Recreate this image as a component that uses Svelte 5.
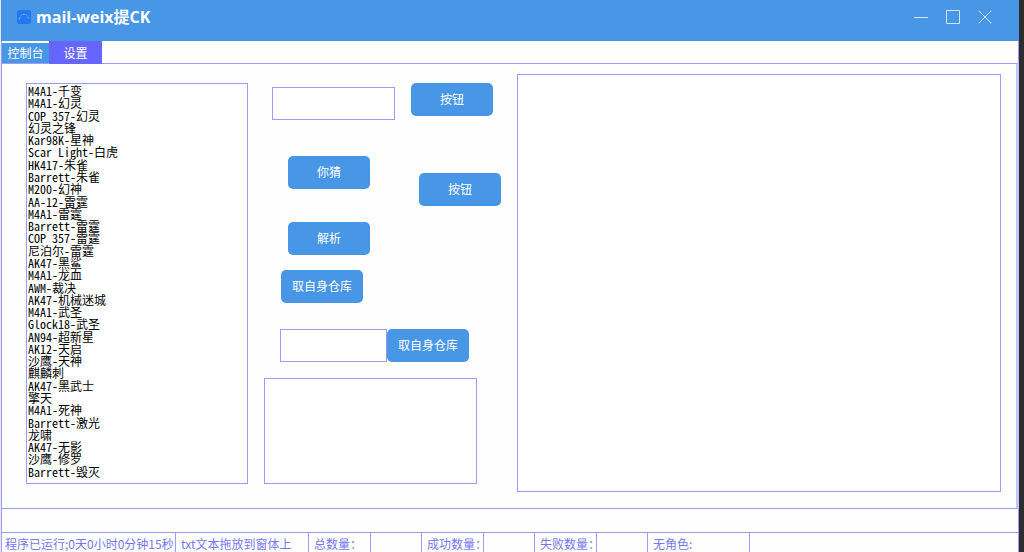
<script lang="ts">
	const weapons = [
		"M4A1-千变",
		"M4A1-幻灵",
		"COP 357-幻灵",
		"幻灵之锋",
		"Kar98K-星神",
		"Scar Light-白虎",
		"HK417-朱雀",
		"Barrett-朱雀",
		"M200-幻神",
		"AA-12-雷霆",
		"M4A1-雷霆",
		"Barrett-雷霆",
		"COP 357-雷霆",
		"尼泊尔-雷霆",
		"AK47-黑鲨",
		"M4A1-龙血",
		"AWM-裁决",
		"AK47-机械迷城",
		"M4A1-武圣",
		"Glock18-武圣",
		"AN94-超新星",
		"AK12-天启",
		"沙鹰-天神",
		"麒麟刺",
		"AK47-黑武士",
		"擎天",
		"M4A1-死神",
		"Barrett-激光",
		"龙啸",
		"AK47-无影",
		"沙鹰-修罗",
		"Barrett-毁灭",
	];

	let tab = $state(0);
	let account = $state("");
	let target = $state("");
	let result = $state("");
	let log = $state("");
</script>

<div class="window">
	<header>
		<svg class="logo" viewBox="0 0 14 14" aria-hidden="true">
			<rect width="14" height="14" rx="2" fill="#2479ee" />
			<path
				d="M2.5 9.5C2.5 6 4.5 4.5 7 4.5S11.5 6 11.5 9.5"
				fill="none"
				stroke="#7db9fa"
				stroke-dasharray="2 1"
			/>
		</svg>
		<h1>mail-weix提CK</h1>
		<div class="controls">
			<button aria-label="最小化">
				<svg viewBox="0 0 14 14"><path d="M0 7.5H14" /></svg>
			</button>
			<button aria-label="最大化">
				<svg viewBox="0 0 14 14"><path d="M.5.5H13.5V13.5H.5Z" /></svg>
			</button>
			<button aria-label="关闭">
				<svg viewBox="0 0 14 14"><path d="M.5.5L13.5 13.5M13.5.5L.5 13.5" /></svg>
			</button>
		</div>
	</header>

	<nav>
		<button class="tab" onclick={() => (tab = 0)} aria-pressed={tab === 0}>控制台</button>
		<button class="tab settings" onclick={() => (tab = 1)} aria-pressed={tab === 1}>设置</button>
	</nav>

	<main>
		<ul class="box">
			{#each weapons as weapon}
				<li>{weapon}</li>
			{/each}
		</ul>

		<div class="form">
			<div class="row first">
				<input class="box" aria-label="账号" bind:value={account} />
				<button class="btn">按钮</button>
			</div>
			<div class="row second">
				<button class="btn">你猜</button>
				<button class="btn low">按钮</button>
			</div>
			<div class="row third">
				<button class="btn">解析</button>
			</div>
			<div class="row fourth">
				<button class="btn">取自身仓库</button>
			</div>
			<div class="row fifth">
				<input class="box" aria-label="仓库" bind:value={target} />
				<button class="btn">取自身仓库</button>
			</div>
			<textarea class="box result" aria-label="结果" bind:value={result}></textarea>
		</div>

		<textarea class="box log" aria-label="日志" bind:value={log}></textarea>
	</main>

	<footer>
		<span class="time">程序已运行;0天0小时0分钟15秒</span>
		<span class="hint">txt文本拖放到窗体上</span>
		<span class="label">总数量：</span>
		<span class="count"></span>
		<span class="label">成功数量：</span>
		<span class="count"></span>
		<span class="label">失败数量：</span>
		<span class="count"></span>
		<span class="role">无角色:</span>
	</footer>
</div>

<style>
	:global(body) {
		background: #2d2d2f;
	}
	* {
		box-sizing: border-box;
	}
	.window {
		display: flex;
		flex-direction: column;
		height: 100vh;
		min-height: 552px;
		margin-right: 5px;
		border-left: 1px solid #e4e8f4;
		background: #fefefe;
		font: 12px/18px "Noto Sans CJK SC", sans-serif;
		overflow: hidden;
	}
	button,
	input,
	textarea {
		font: inherit;
	}
	button {
		border: 0;
		padding: 0;
		color: #fff;
		background: #4896e6;
	}
	header {
		display: flex;
		align-items: center;
		height: 41px;
		padding: 0 27px 7px 16px;
		background: #4896e6;
	}
	.logo {
		width: 14px;
		height: 14px;
	}
	h1 {
		margin: 0 0 0 5px;
		color: #fff;
		font: bold 16px/20px "Open Sans", "Noto Sans CJK SC", sans-serif;
	}
	.controls {
		display: flex;
		gap: 18px;
		margin-left: auto;
	}
	.controls svg {
		display: block;
		width: 14px;
		height: 14px;
		fill: none;
		stroke: #d3e6fa;
	}
	nav {
		display: flex;
		align-items: flex-end;
		height: 22px;
		border-left: 1px solid #9c9cff;
		border-right: 1px solid #9c9cff;
	}
	.tab {
		width: 47px;
		height: 20px;
	}
	.settings {
		width: 53px;
		height: 23px;
		margin-bottom: -1px;
		background: #6666ff;
		z-index: 1;
	}
	main {
		display: flex;
		flex: 1;
		padding: 10px 15px 16px 24px;
		border: 1px solid #9c9cff;
		border-right: 3px solid #c4c4fa;
	}
	.box {
		display: block;
		margin: 0;
		border: 1px solid #9c9cff;
		border-radius: 0;
		background: #fff;
		resize: none;
		outline: 0;
	}
	ul.box {
		display: flex;
		flex-direction: column;
		justify-content: space-between;
		width: 222px;
		margin: 9px 0 8px;
		padding: 1px 1px 5px;
		list-style: none;
		font-feature-settings: "hwid";
		line-height: 12px;
	}
	li {
		white-space: nowrap;
	}
	.form {
		display: flex;
		flex-direction: column;
		width: 238px;
		margin: 9px 15px 8px 16px;
	}
	.row {
		display: flex;
		align-items: flex-start;
	}
	.btn {
		width: 82px;
		height: 33px;
		padding-bottom: 2px;
		border-radius: 5px;
	}
	.first {
		gap: 16px;
		margin-left: 8px;
	}
	.first .box {
		width: 123px;
		height: 33px;
		margin-top: 4px;
	}
	.second {
		gap: 49px;
		height: 50px;
		margin: 36px 0 16px 24px;
	}
	.low {
		align-self: flex-end;
	}
	.third {
		margin-left: 24px;
	}
	.fourth {
		margin: 15px 0 26px 17px;
	}
	.fifth {
		margin-left: 16px;
	}
	.fifth .box {
		width: 107px;
		height: 33px;
	}
	.result {
		flex: 1;
		width: 213px;
		margin-top: 16px;
	}
	.log {
		flex: 1;
		min-width: 0;
	}
	footer {
		display: flex;
		height: 43px;
		padding-top: 24px;
		border-left: 1px solid #9c9cff;
		border-right: 1px solid #9c9cff;
		background: linear-gradient(#9c9cff, #9c9cff) 0 23px / 100% 1px no-repeat;
		color: #7777f2;
		line-height: 22px;
	}
	footer span {
		flex: none;
		padding-left: 5px;
		border-right: 1px solid #9c9cff;
		overflow: hidden;
		white-space: nowrap;
	}
	.time {
		width: 174px;
	}
	footer .time {
		padding-left: 3px;
	}
	.hint {
		width: 133px;
	}
	.label {
		width: 62px;
	}
	.count {
		width: 51px;
	}
	.role {
		width: 102px;
	}
</style>
